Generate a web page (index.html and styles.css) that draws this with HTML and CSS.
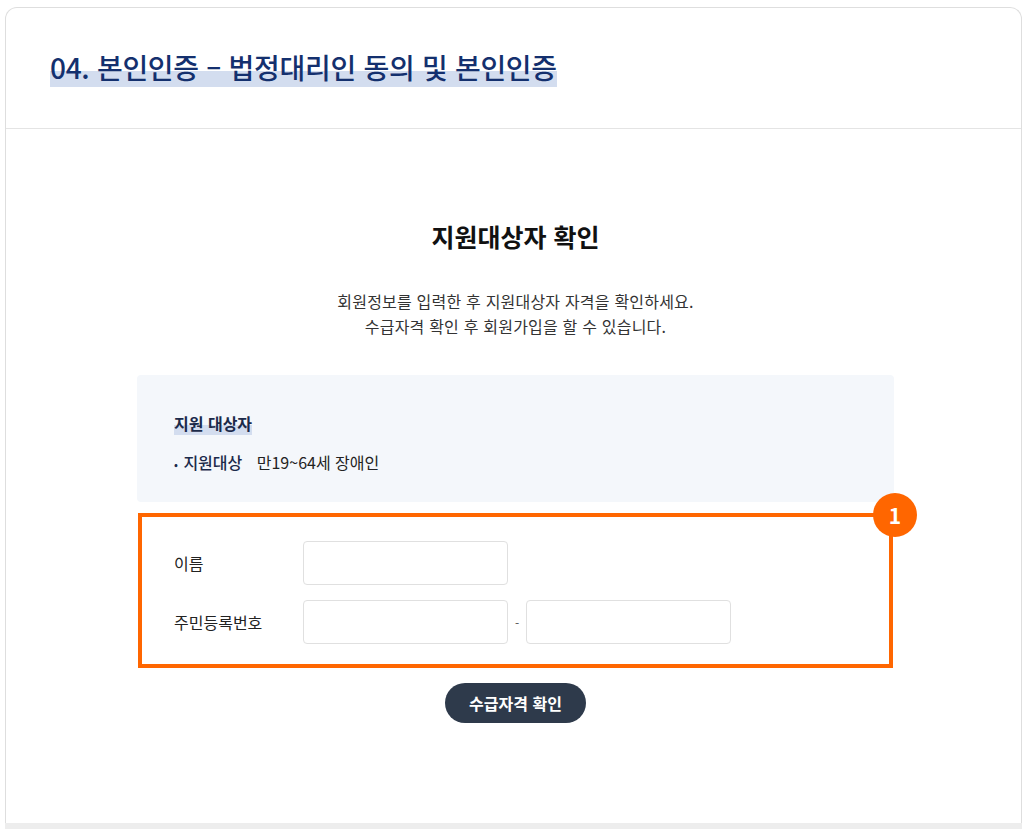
FILE: index.html
```html
<!DOCTYPE html>
<html lang="ko">

<head>
    <meta charset="utf-8">
    <title>본인인증</title>
    <link rel="stylesheet" href="styles.css">
</head>

<body>
    <div class="kort">
        <header class="kort_top">
            <h1><span class="marker">04. 본인인증 – 법정대리인 동의 및 본인인증</span></h1>
        </header>

        <main class="indhold">
            <h2>지원대상자 확인</h2>
            <p class="intro">회원정보를 입력한 후 지원대상자 자격을 확인하세요.<br>수급자격 확인 후 회원가입을 할 수 있습니다.</p>

            <section class="info">
                <h3><span class="marker">지원 대상자</span></h3>
                <p class="punkt"><span class="dot">•</span> 지원대상 <span class="vaerdi">만19~64세 장애인</span></p>
            </section>

            <section class="formular">
                <span class="nr">1</span>
                <div class="raekke">
                    <label class="navn">이름</label>
                    <input class="felt" type="text">
                </div>
                <div class="raekke">
                    <label class="navn">주민등록번호</label>
                    <input class="felt" type="text">
                    <span class="streg">-</span>
                    <input class="felt" type="password">
                </div>
            </section>

            <button class="tjek">수급자격 확인</button>
        </main>
    </div>
    <div class="bund"></div>
</body>

</html>
```

FILE: styles.css
```css
body {
    margin: 0;
    background: #fff;
    font-family: "Noto Sans CJK KR", "Noto Sans", sans-serif;
    color: #222;
}

.kort {
    margin: 7px 8px 0 5px;
    height: 816px;
    border: 1px solid #dedede;
    border-bottom: none;
    border-radius: 12px 12px 0 0;
    box-sizing: border-box;
}

.kort_top {
    height: 120px;
    padding-left: 44px;
    border-bottom: 1px solid #e4e4e4;
    display: flex;
    align-items: center;
}

h1 {
    margin: 0;
    font-size: 28px;
    font-weight: 500;
    color: #14306e;
    letter-spacing: -0.3px;
    padding-bottom: 3px;
}

.marker {
    background: linear-gradient(transparent 60%, #d3ddef 60%);
}

.indhold {
    padding: 90px 0 0 4px;
    text-align: center;
}

h2 {
    margin: 0;
    font-size: 25px;
    font-weight: 700;
    color: #111;
    line-height: 34px;
}

.intro {
    margin: 36px 0 0;
    font-size: 16px;
    line-height: 25px;
    color: #333;
    letter-spacing: 0.2px;
}

.info {
    width: 757px;
    margin: 36px auto 0;
    padding: 36px 37px 0;
    box-sizing: border-box;
    background: #f4f7fb;
    border-radius: 4px;
    text-align: left;
    height: 127px;
}

h3 {
    margin: 0;
    font-size: 16px;
    font-weight: 700;
    color: #1b2a4a;
    line-height: 24px;
}

.punkt {
    margin: 15px 0 0;
    font-size: 16px;
    font-weight: 500;
    color: #1b2a4a;
    line-height: 24px;
}

.dot {
    font-size: 11px;
    margin-right: 1px;
}

.vaerdi {
    margin-left: 10px;
    font-weight: 400;
    color: #222;
}

.formular {
    position: relative;
    width: 755px;
    margin: 11px auto 0;
    padding: 24px 32px 20px;
    box-sizing: border-box;
    border: 4px solid #ff6600;
    text-align: left;
    display: flex;
    flex-direction: column;
    gap: 15px;
}

.nr {
    position: absolute;
    top: -24px;
    right: -28px;
    width: 44px;
    height: 44px;
    border-radius: 50%;
    background: #ff6600;
    color: #fff;
    font-size: 21px;
    font-weight: 700;
    line-height: 44px;
    text-align: center;
}

.raekke {
    display: flex;
    align-items: center;
}

.navn {
    width: 129px;
    font-size: 16px;
    color: #222;
}

.felt {
    width: 205px;
    height: 44px;
    box-sizing: border-box;
    border: 1px solid #e0e0e0;
    border-radius: 4px;
    background: #fff;
    margin: 0;
}

.streg {
    width: 18px;
    text-align: center;
    font-size: 12px;
    color: #555;
}

.tjek {
    margin-top: 15px;
    width: 141px;
    height: 40px;
    border: none;
    border-radius: 20px;
    background: #2e3a4b;
    color: #fff;
    font-family: inherit;
    font-size: 16px;
    font-weight: 700;
    cursor: pointer;
}

.bund {
    height: 6px;
    background: #ededed;
    margin: 0 8px 0 5px;
}
```
